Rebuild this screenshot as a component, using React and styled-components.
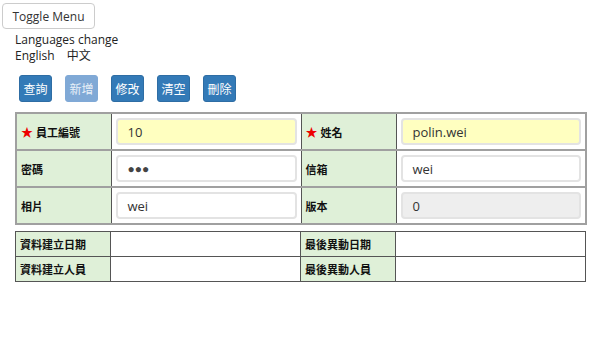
import styled, { createGlobalStyle } from "styled-components";

const GlobalStyle = createGlobalStyle`
  body {
    margin: 0;
    font-family: "Open Sans", "Noto Sans CJK TC", sans-serif;
    font-size: 12px;
    color: #222;
    background: #fff;
  }
`;

const Page = styled.div`
  padding: 3px 15px 0 15px;
`;

const ToggleButton = styled.button`
  margin-left: -13px;
  height: 26px;
  width: 93px;
  border: 1px solid #ccc;
  border-radius: 4px;
  background: #fff;
  font-family: "Open Sans", sans-serif;
  font-size: 12px;
  color: #333;
  padding: 0;
`;

const LangBlock = styled.div`
  margin-top: 3px;
  line-height: 16px;
  font-size: 12px;
`;

const LangRow = styled.div`
  display: flex;
  gap: 12px;
`;

const Toolbar = styled.div`
  display: flex;
  gap: 13px;
  padding: 11px 0 0 4px;
`;

const ActionButton = styled.button`
  width: 33px;
  height: 27px;
  padding: 0;
  border: 1px solid;
  border-radius: 3px;
  background: ${(p) => (p.disabled ? "#80a9d6" : "#337ab7")};
  border-color: ${(p) => (p.disabled ? "#80a9d6" : "#2e6da4")};
  color: ${(p) => (p.disabled ? "#e8f0f8" : "#fff")};
  font-family: "Noto Sans CJK TC", sans-serif;
  font-size: 12px;
`;

const FormTable = styled.table`
  margin-top: 10px;
  width: 570px;
  table-layout: fixed;
  border-collapse: collapse;
  border: 2px solid #a0a0a0;
`;

const InfoTable = styled.table`
  margin-top: 6px;
  width: 570px;
  table-layout: fixed;
  border-collapse: collapse;
  border: 1px solid #555;
`;

const LabelCell = styled.td`
  background: #dff0d8;
  font-family: "Noto Sans CJK TC", sans-serif;
  font-weight: 700;
  font-size: 11px;
  color: #111;
  padding: 0 0 0 4px;
  white-space: nowrap;
  height: ${(p) => p.$h}px;
  border-top: ${(p) => (p.$thin ? "1px solid #555" : "2px solid #a0a0a0")};
  border-bottom: ${(p) => (p.$thin ? "1px solid #555" : "2px solid #a0a0a0")};
  border-left: 1px solid #555;
  border-right: 1px solid #555;
`;

const ValueCell = styled.td`
  height: ${(p) => p.$h}px;
  padding: 0 4px 0 4px;
  border-top: ${(p) => (p.$thin ? "1px solid #555" : "2px solid #a0a0a0")};
  border-bottom: ${(p) => (p.$thin ? "1px solid #555" : "2px solid #a0a0a0")};
  border-left: 1px solid #555;
  border-right: 1px solid #555;
`;

const Star = styled.span`
  color: #e00;
  font-size: 12px;
  margin-right: 3px;
`;

const Field = styled.div`
  height: 27px;
  box-sizing: border-box;
  border: 2px solid #e3e3e3;
  border-radius: 4px;
  background: ${(p) => p.$bg || "#fff"};
  display: flex;
  align-items: center;
  padding-left: 10px;
  font-family: "Open Sans", sans-serif;
  font-size: 13px;
  color: #333;
`;

const Dots = styled.span`
  font-size: 12px;
  letter-spacing: 0;
  color: #444;
`;

function Columns() {
  return (
    <colgroup>
      <col style={{ width: 95 }} />
      <col style={{ width: 190 }} />
      <col style={{ width: 95 }} />
      <col style={{ width: 190 }} />
    </colgroup>
  );
}

function Label({ children, required }) {
  return (
    <LabelCell $h={35}>
      {required && <Star>★</Star>}
      {children}
    </LabelCell>
  );
}

export default function App() {
  return (
    <>
      <GlobalStyle />
      <Page>
        <ToggleButton>Toggle Menu</ToggleButton>
        <LangBlock>
          <div>Languages change</div>
          <LangRow>
            <span>English</span>
            <span>中文</span>
          </LangRow>
        </LangBlock>
        <Toolbar>
          <ActionButton>查詢</ActionButton>
          <ActionButton disabled>新增</ActionButton>
          <ActionButton>修改</ActionButton>
          <ActionButton>清空</ActionButton>
          <ActionButton>刪除</ActionButton>
        </Toolbar>

        <FormTable>
          <Columns />
          <tbody>
            <tr>
              <Label required>員工編號</Label>
              <ValueCell $h={35}>
                <Field $bg="#ffffc0">10</Field>
              </ValueCell>
              <Label required>姓名</Label>
              <ValueCell $h={35}>
                <Field $bg="#ffffc0">polin.wei</Field>
              </ValueCell>
            </tr>
            <tr>
              <Label>密碼</Label>
              <ValueCell $h={35}>
                <Field>
                  <Dots>●●●</Dots>
                </Field>
              </ValueCell>
              <Label>信箱</Label>
              <ValueCell $h={35}>
                <Field>wei</Field>
              </ValueCell>
            </tr>
            <tr>
              <Label>相片</Label>
              <ValueCell $h={35}>
                <Field>wei</Field>
              </ValueCell>
              <Label>版本</Label>
              <ValueCell $h={35}>
                <Field $bg="#eeeeee">0</Field>
              </ValueCell>
            </tr>
          </tbody>
        </FormTable>

        <InfoTable>
          <Columns />
          <tbody>
            <tr>
              <LabelCell $thin $h={24}>資料建立日期</LabelCell>
              <ValueCell $thin $h={24} />
              <LabelCell $thin $h={24}>最後異動日期</LabelCell>
              <ValueCell $thin $h={24} />
            </tr>
            <tr>
              <LabelCell $thin $h={24}>資料建立人員</LabelCell>
              <ValueCell $thin $h={24} />
              <LabelCell $thin $h={24}>最後異動人員</LabelCell>
              <ValueCell $thin $h={24} />
            </tr>
          </tbody>
        </InfoTable>
      </Page>
    </>
  );
}
